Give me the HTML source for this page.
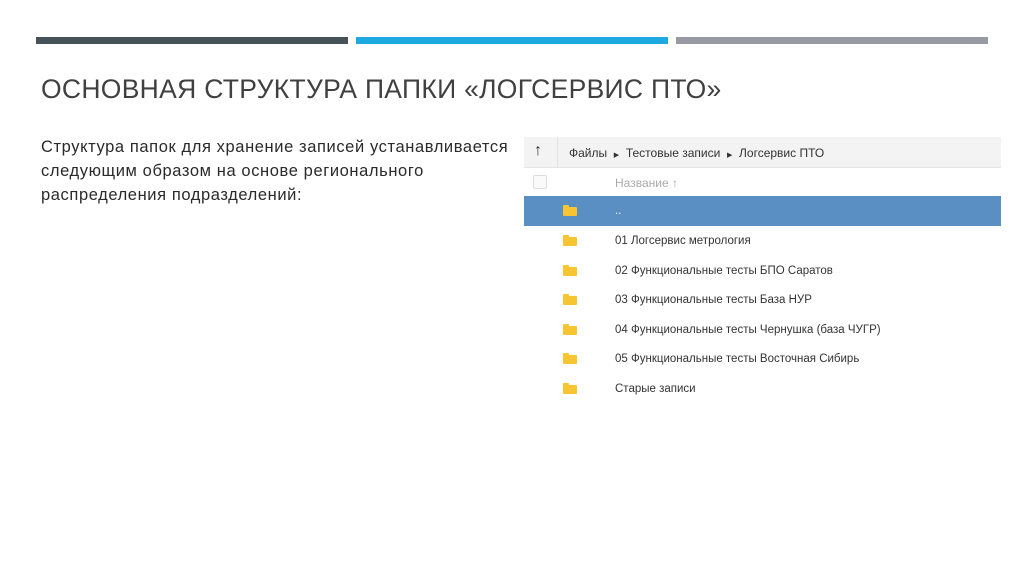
<!DOCTYPE html>
<html><head><meta charset="utf-8"><style>
body{margin:0;width:1024px;height:574px;background:#fff;position:relative;overflow:hidden;font-family:"Liberation Sans",sans-serif}
.bar{position:absolute;top:37px;height:7px;width:312px}
.t{position:absolute;left:41px;top:74px;font-size:26.5px;letter-spacing:0.3px;color:#404040;white-space:nowrap}
.p{position:absolute;left:41px;top:135px;font-size:16.5px;letter-spacing:0.6px;line-height:24px;color:#2a2a2a;width:480px;white-space:nowrap}
.hdr{position:absolute;left:524px;top:137px;width:477px;height:30px;background:#f3f3f3;border-bottom:1px solid #e6e6e6}
.sm{position:absolute;font-size:12px;color:#333;white-space:nowrap}
.row{position:absolute;left:524px;width:477px;height:30px}
.f{position:absolute;left:39px;top:11px;width:14px;height:9px;background:#f6c531;border-radius:1px}
.f:before{content:"";position:absolute;left:0;top:-2px;width:6px;height:3px;background:#f6c531;border-radius:1px 1px 0 0}
.row span{position:absolute;left:91px;top:9px;font-size:11.5px;color:#333}
</style></head><body>
<div class="bar" style="left:36px;background:#465257"></div>
<div class="bar" style="left:356px;background:#1ea9e1"></div>
<div class="bar" style="left:676px;background:#959aa3"></div>
<div class="t">ОСНОВНАЯ СТРУКТУРА ПАПКИ «ЛОГСЕРВИС ПТО»</div>
<div class="p">Структура папок для хранение записей устанавливается<br>следующим образом на основе регионального<br>распределения подразделений:</div>
<div class="hdr">
<div class="sm" style="left:10px;top:5px;font-size:16px;font-weight:bold">↑</div>
<div style="position:absolute;left:33px;top:0;width:1px;height:30px;background:#e2e2e2"></div>
<div class="sm" style="left:45px;top:9px">Файлы &nbsp;<span style="font-size:7px">▶</span>&nbsp; Тестовые записи &nbsp;<span style="font-size:7px">▶</span>&nbsp; Логсервис ПТО</div>
</div>
<div style="position:absolute;left:533px;top:175px;width:12px;height:12px;border:1px solid #ddd;border-radius:2px;background:#fafafa"></div>
<div class="sm" style="left:615px;top:176px;color:#aaa">Название ↑</div>
<div class="row" style="top:196px;background:#5a8fc3"><div class="f"></div><span style="color:#fff">..</span></div>
<div class="row" style="top:226px"><div class="f"></div><span>01 Логсервис метрология</span></div>
<div class="row" style="top:256px"><div class="f"></div><span>02 Функциональные тесты БПО Саратов</span></div>
<div class="row" style="top:285px"><div class="f"></div><span>03 Функциональные тесты База НУР</span></div>
<div class="row" style="top:315px"><div class="f"></div><span>04 Функциональные тесты Чернушка (база ЧУГР)</span></div>
<div class="row" style="top:344px"><div class="f"></div><span>05 Функциональные тесты Восточная Сибирь</span></div>
<div class="row" style="top:374px"><div class="f"></div><span>Старые записи</span></div>
</body></html>
